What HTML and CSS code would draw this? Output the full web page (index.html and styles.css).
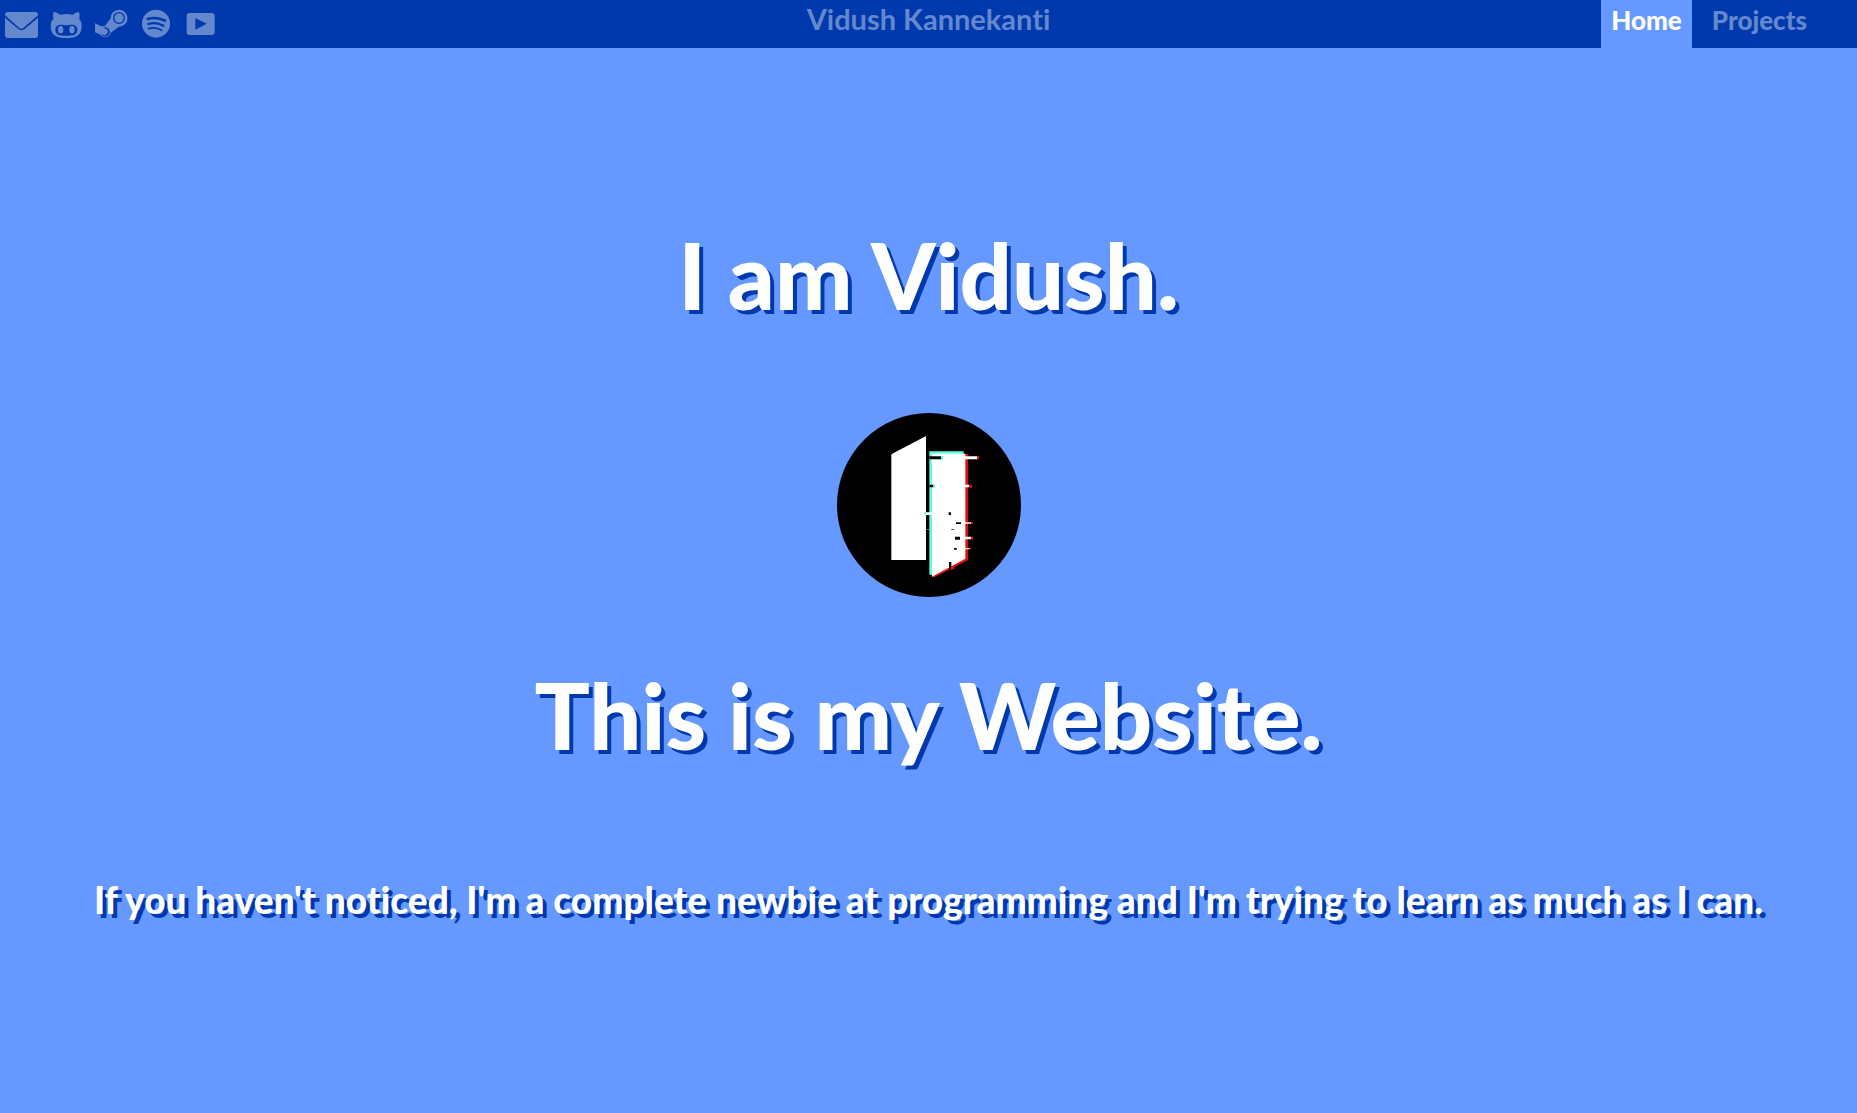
FILE: index.html
```html
<!DOCTYPE html>
<html lang="en">
<head>
<meta charset="utf-8">
<meta name="viewport" content="width=device-width, initial-scale=1">
<title>Vidush Kannekanti</title>
<link rel="stylesheet" href="styles.css">
</head>
<body>
<header class="topbar">
  <nav class="social" aria-label="Social links">
    <a href="#email" aria-label="Email"><svg viewBox="0 0 135 144"><path d="M24 36H105Q114 36 114 46L70 84Q64 89 58 84L15 46Q15 36 24 36ZM15 53L55 87Q64 94 74 87L114 53V105Q114 114 105 114H24Q15 114 15 105Z"/></svg></a>
    <a href="#github" aria-label="GitHub"><svg viewBox="135 0 135 144"><path fill-rule="evenodd" d="M161 36Q171 37 180 44Q199 40 218 44Q227 37 237 36Q241 46 238 57Q245 64 245 77C245 106 229 114 199 114S152 106 152 77Q152 64 160 57Q157 46 161 36ZM182 74C171 74 166 81 166 89C166 104 178 107 199 107S232 104 232 89C232 81 227 74 216 74C208 74 206 76 199 76S190 74 182 74Z"/><ellipse cx="182" cy="89" rx="8" ry="11"/><ellipse cx="216" cy="89" rx="8" ry="11"/></svg></a>
    <a href="#steam" aria-label="Steam"><svg viewBox="270 0 135 144"><path fill-rule="evenodd" d="M357 29A25 25 0 0 1 357 80L332 98A18 18 0 0 1 299 103L285 97V70L304 79Q309 77 315 78L332 55A25 25 0 0 1 357 29ZM357 36A18 18 0 1 0 357 72A18 18 0 1 0 357 36ZM309 83L319 87A10 10 0 0 1 311 105L303 102A14 14 0 1 0 309 83Z"/><circle cx="357" cy="54" r="14"/></svg></a>
    <a href="#spotify" aria-label="Spotify"><svg viewBox="405 0 135 144"><circle cx="468" cy="71" r="42"/><path class="cut" stroke-width="8" d="M443 57Q471 49 495 62"/><path class="cut" stroke-width="7" d="M445 72Q469 65 490 77"/><path class="cut" stroke-width="5" d="M446 86Q467 80 485 91"/></svg></a>
    <a href="#youtube" aria-label="YouTube"><svg viewBox="540 0 135 144"><path fill-rule="evenodd" d="M569 39H635Q644 39 644 48V96Q644 105 635 105H569Q560 105 560 96V48Q560 39 569 39ZM586 54V89L620 71Z"/></svg></a>
  </nav>
  <div class="brand">Vidush Kannekanti</div>
  <nav class="pages" aria-label="Pages">
    <a class="active" href="#home" aria-current="page">Home</a>
    <a href="#projects">Projects</a>
  </nav>
</header>
<main class="hero">
  <h1>I am Vidush.</h1>
  <svg class="logo" viewBox="48 39 552 552" role="img" aria-label="Open door logo">
    <circle cx="324" cy="315" r="276"/>
    <path fill="#fff" d="M211 163L315 108V480H211Z"/>
    <path fill="#5fffe0" d="M325 154H428V163H333V524H325Z"/>
    <path fill="#e80c0c" d="M432 162H441V480L341 531H333Z"/>
    <path fill="#fff" d="M333 161H433V476L333 530Z"/>
    <path d="M325 169H360V178H325ZM325 254H337V262H325ZM383 337H390V345H383ZM405 367H420V372H405ZM391 387H399V389H391ZM402 410H417V419H402ZM399 444H407V449H399ZM384 486H391V511H384Z"/>
    <path fill="#5fffe0" d="M360 168H366V179H360ZM337 253H342V263H337ZM310 336H316V346H310Z"/>
    <path fill="#fff" d="M432 169H468V178H432ZM432 254H445V262H432ZM315 337H334V345H315ZM432 367H450V371H432ZM417 410H450V418H417ZM432 444H444V448H432Z"/>
    <path fill="#e80c0c" d="M468 168H474V178H468ZM445 254H453V263H445ZM450 367H456V372H450ZM450 410H456V419H450ZM444 444H450V449H444ZM389 503L400 497V506L390 511Z"/>
    <path fill="#aaa" d="M317 387H331V389H317Z"/>
  </svg>
  <h1>This is my Website.</h1>
  <p>If you haven't noticed, I'm a complete newbie at programming and I'm trying to learn as much as I can.</p>
</main>
</body>
</html>
```
FILE: styles.css
```css
* {
  box-sizing: border-box;
}

body {
  margin: 0;
  min-height: 100vh;
  background: #6699ff;
  color: #fff;
  font-family: Lato, "Open Sans", sans-serif;
  font-weight: 900;
  font-variant-ligatures: none;
}

.topbar {
  display: grid;
  grid-template-columns: 1fr auto 1fr;
  height: 48px;
  background: #0039ad;
  color: #6488cd;
}

.topbar a {
  color: inherit;
  text-decoration: none;
}

.social {
  display: flex;
}

.social svg {
  display: block;
  width: 45px;
  height: 48px;
  fill: currentColor;
}

.cut {
  fill: none;
  stroke: #0039ad;
  stroke-linecap: round;
}

.brand {
  font-size: 29px;
  font-weight: 700;
  line-height: 38px;
}

.pages {
  display: flex;
  justify-content: flex-end;
  gap: 10px;
  padding-right: 40px;
  font-size: 26px;
  line-height: 41px;
}

.pages a {
  padding: 0 10px;
}

.topbar .active {
  background: #6699ff;
  color: #fff;
}

.hero {
  display: flex;
  flex-direction: column;
  align-items: center;
  padding: 171px 16px 0;
  text-align: center;
}

.hero h1 {
  margin: 0;
  font-size: 92px;
  font-weight: 900;
  line-height: 112px;
  text-shadow: 4px 4px #0039ad;
}

.logo {
  width: 184px;
  height: 184px;
  margin: 82px 0 62px;
}

.hero p {
  margin: 105px 0 0;
  font-size: 37px;
  line-height: 48px;
  text-shadow: 4px 4px #0039ad;
}
```
